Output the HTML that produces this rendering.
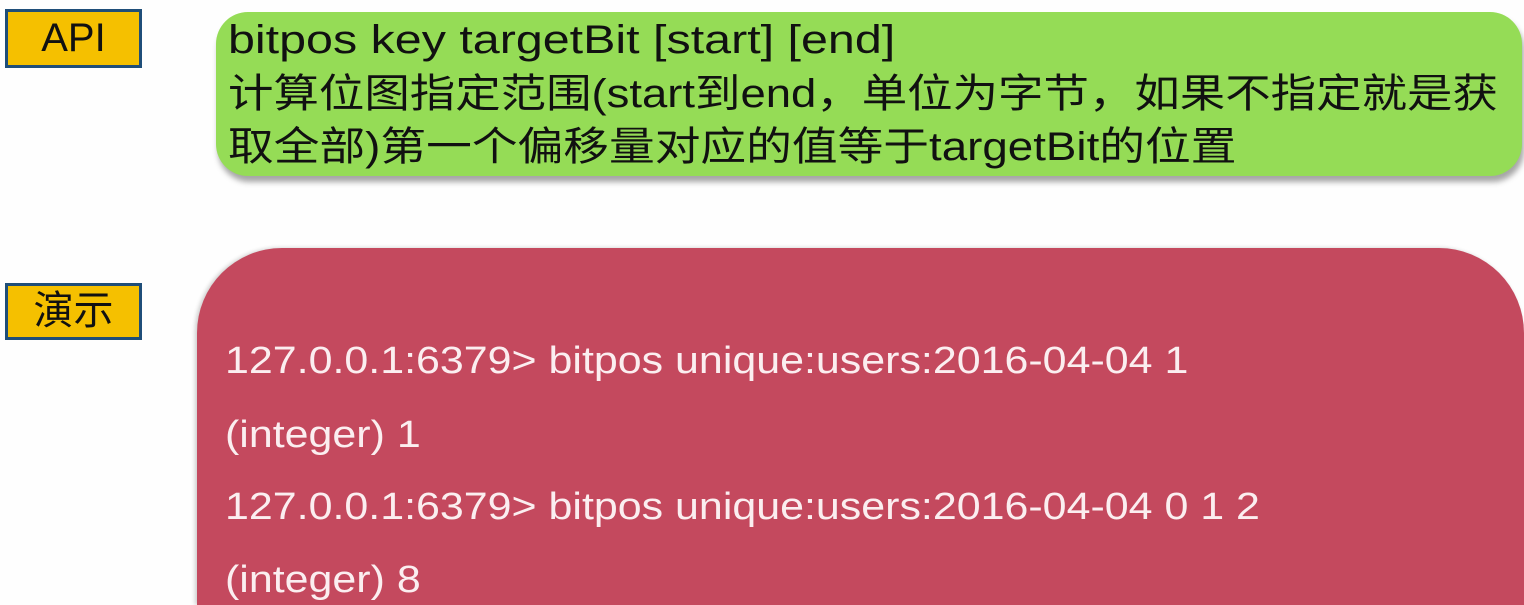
<!DOCTYPE html>
<html><head><meta charset="utf-8"><style>
html,body{margin:0;padding:0;width:1524px;height:605px;overflow:hidden;background:#fefefe;position:relative;font-family:"Liberation Sans","Noto Sans CJK SC",sans-serif;}
.tag{position:absolute;left:5px;width:131px;background:#f5c000;border:3px solid #1f4e79;color:#111;font-size:40px;text-align:center;box-sizing:content-box;}
.green{position:absolute;left:216px;top:12px;width:1306px;height:164px;background:#95dc56;border-radius:32px;box-shadow:2px 6px 6px rgba(0,0,0,0.35);}
.gl{position:absolute;left:228px;font-size:40px;line-height:53px;color:#111;white-space:nowrap;transform-origin:0 50%;}
.red{position:absolute;left:197px;top:248px;width:1327px;height:357px;background:#c4495e;border-radius:85px 85px 0 0;box-shadow:-2px 0 4px rgba(0,0,0,0.2);}
.rt{position:absolute;left:225px;color:#fbeef0;font-size:38px;white-space:nowrap;line-height:40px;transform:scaleX(1.13);transform-origin:0 50%;}
</style></head><body>
<div class="tag" style="top:9px;height:53px;line-height:53px;">API</div>
<div class="tag" style="top:283px;height:51px;line-height:51px;">演示</div>
<div class="green"></div>
<div class="gl" style="top:14px;transform:scaleX(1.21)">bitpos key targetBit [start] [end]</div>
<div class="gl" style="top:68px;transform:scaleX(1.136)">计算位图指定范围(start到end，单位为字节，如果不指定就是获</div>
<div class="gl" style="top:121px;transform:scaleX(1.143)">取全部)第一个偏移量对应的值等于targetBit的位置</div>
<div class="red"></div>
<div class="rt" style="top:341px">127.0.0.1:6379&gt; bitpos unique:users:2016-04-04 1</div>
<div class="rt" style="top:415px">(integer) 1</div>
<div class="rt" style="top:487px">127.0.0.1:6379&gt; bitpos unique:users:2016-04-04 0 1 2</div>
<div class="rt" style="top:560px">(integer) 8</div>
</body></html>
